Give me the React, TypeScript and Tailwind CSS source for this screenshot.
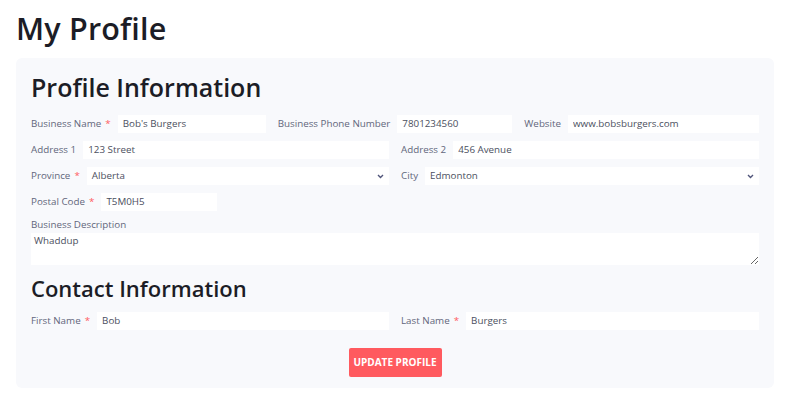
import React from 'react';

const Req = () => <span className="text-[#ff5a5f] ml-1">*</span>;

const Field = ({
  label,
  value,
  required,
  className = '',
}: {
  label: string;
  value: string;
  required?: boolean;
  className?: string;
}) => (
  <div className={`flex items-center gap-[7px] h-[18px] ${className}`}>
    <label className="whitespace-nowrap text-[#62667b] leading-[18px]">
      {label}
      {required && <Req />}
    </label>
    <input
      defaultValue={value}
      className="flex-1 min-w-0 h-[18px] leading-[18px] bg-white px-[5px] text-[#4b4f60] outline-none"
    />
  </div>
);

const SelectField = ({
  label,
  value,
  required,
}: {
  label: string;
  value: string;
  required?: boolean;
}) => (
  <div className="flex items-center gap-[7px] h-[18px]">
    <label className="whitespace-nowrap text-[#62667b] leading-[18px]">
      {label}
      {required && <Req />}
    </label>
    <div className="flex-1 flex items-center justify-between h-[18px] leading-[18px] bg-white pl-[5px] pr-[5px] text-[#4b4f60]">
      <span>{value}</span>
      <svg width="7" height="5" viewBox="0 0 7 5" fill="none">
        <path d="M1 1 3.5 3.5 6 1" stroke="#50557a" strokeWidth="1.4" />
      </svg>
    </div>
  </div>
);

const App = () => {
  return (
    <div className="px-4 pt-[6px] bg-white min-h-[399px]" style={{ fontFamily: '"Open Sans", "Liberation Sans", sans-serif' }}>
      <h1 className="text-[30.5px] leading-[44px] font-semibold text-[#1c1d26] tracking-[0.2px]">My Profile</h1>

      <div className="mt-[8px] w-[758px] bg-[#f8f9fc] rounded-[6px] px-[15px] pt-[12px] pb-[11px] text-[9.8px]">
        <h2 className="text-[25px] leading-[34px] font-semibold text-[#1c1d26]">Profile Information</h2>

        <div className="mt-[11px] flex flex-col gap-[8px]">
          <div className="grid grid-cols-3 gap-3">
            <Field label="Business Name" value="Bob's Burgers" required />
            <Field label="Business Phone Number" value="7801234560" />
            <Field label="Website" value="www.bobsburgers.com" />
          </div>
          <div className="grid grid-cols-2 gap-3">
            <Field label="Address 1" value="123 Street" />
            <Field label="Address 2" value="456 Avenue" />
          </div>
          <div className="grid grid-cols-2 gap-3">
            <SelectField label="Province" value="Alberta" required />
            <SelectField label="City" value="Edmonton" />
          </div>
          <Field label="Postal Code" value="T5M0H5" required className="w-[186px]" />
        </div>

        <div className="mt-[7px]">
          <label className="block text-[#62667b] leading-[14px]">Business Description</label>
          <textarea
            defaultValue="Whaddup"
            className="block mt-[1px] w-full h-[32px] bg-white px-[3px] pt-[1px] text-[#4b4f60] outline-none"
          />
        </div>

        <h2 className="mt-[7px] text-[22px] leading-[32px] font-semibold text-[#1c1d26]">Contact Information</h2>

        <div className="mt-[8px] grid grid-cols-2 gap-3">
          <Field label="First Name" value="Bob" required />
          <Field label="Last Name" value="Burgers" required />
        </div>

        <div className="mt-[18px] flex justify-center">
          <button className="h-[29px] w-[93px] bg-[#ff5a5f] text-white text-[10px] font-bold rounded-[2px]">
            UPDATE PROFILE
          </button>
        </div>
      </div>
    </div>
  );
};

export default App;
